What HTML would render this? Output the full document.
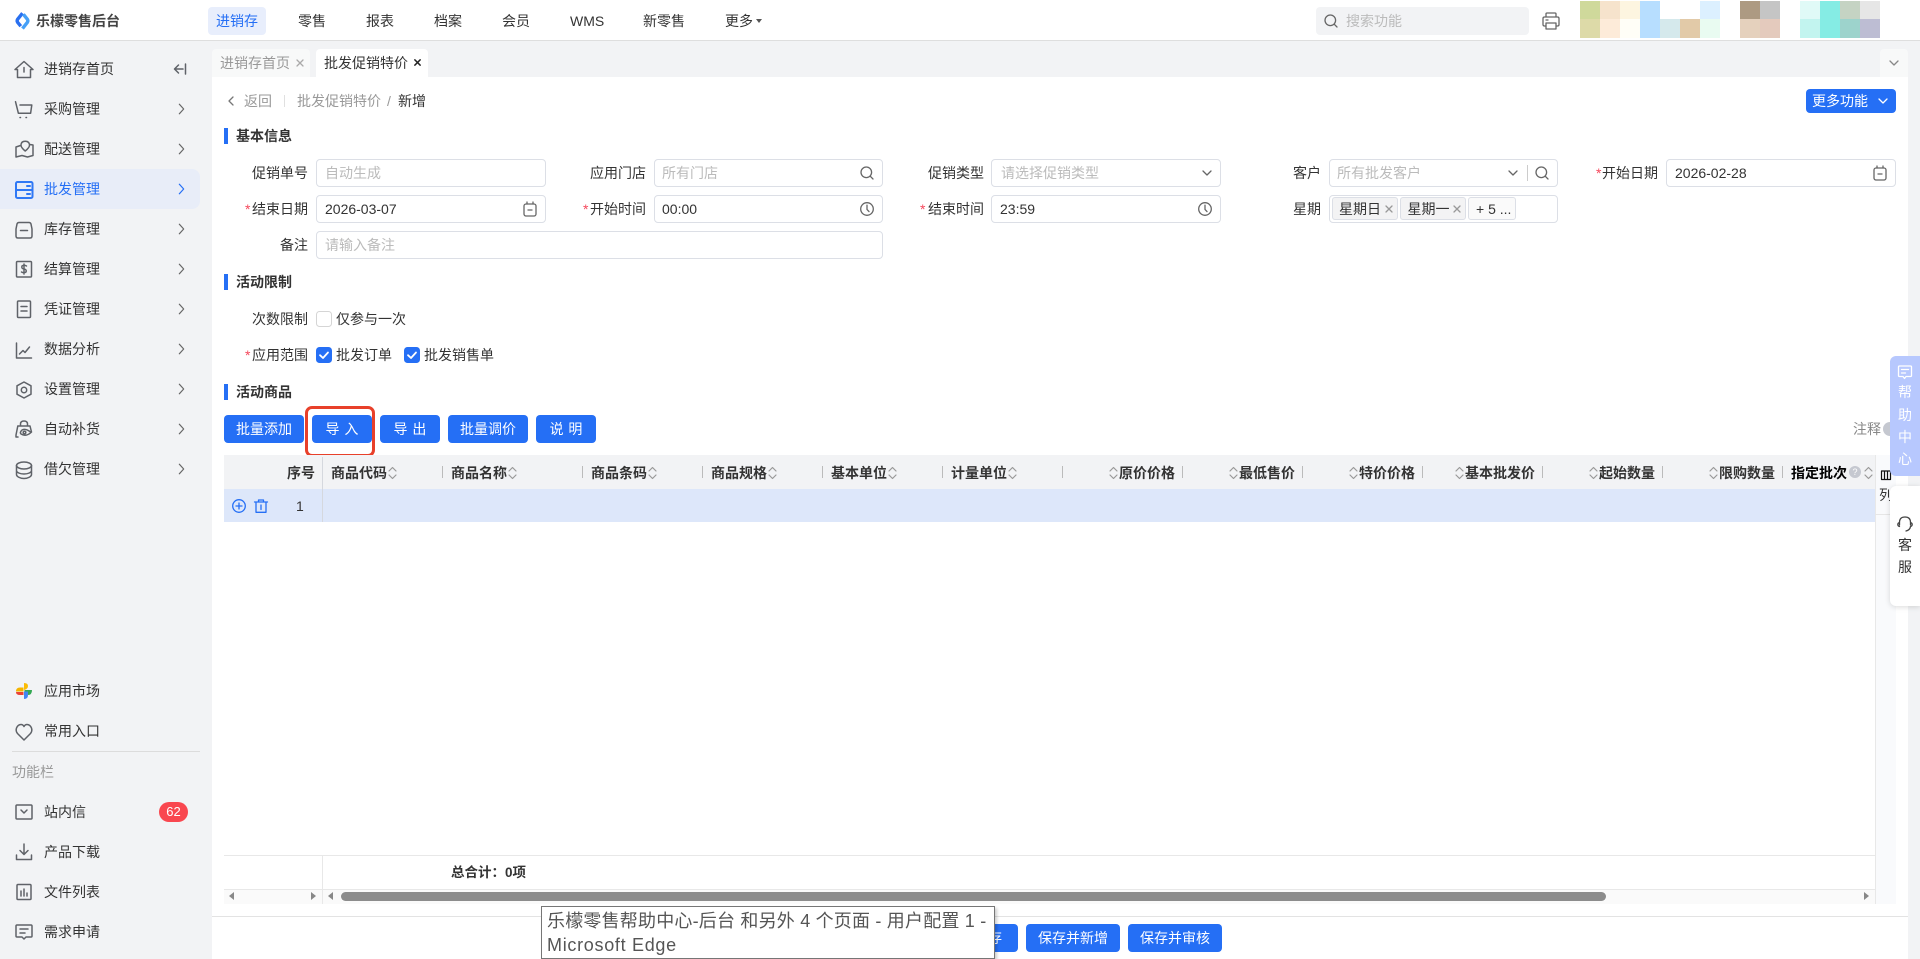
<!DOCTYPE html>
<html lang="zh-CN"><head><meta charset="utf-8"><title>乐檬零售后台</title>
<style>
*{box-sizing:border-box}
html,body{margin:0;padding:0;width:1920px;height:959px;overflow:hidden;background:#fff;color:#333;font:14px/20px "Liberation Sans","Noto Sans CJK SC",sans-serif}
.a,.t,.i,.b,svg{position:absolute}
.t{white-space:nowrap;line-height:20px;height:20px}
.g{color:#999}.p{color:#bbb}.r{color:#f5475b}
.h{font-weight:bold}
.i{height:28px;border:1px solid #dcdfe6;border-radius:4px;background:#fff}
.b{background:#256ff5;color:#fff;border-radius:4px;height:28px;display:flex;align-items:center;justify-content:center;white-space:pre}
.bar{position:absolute;left:224px;width:4px;height:16px;background:#256ff5}
.d{position:absolute;top:466px;width:1px;height:12px;background:#bbb}
svg{overflow:visible;fill:none;stroke:#666;stroke-width:1.3;stroke-linecap:round;stroke-linejoin:round}
.m{stroke:#5f6268;stroke-width:1.5}
.tag{position:absolute;top:197px;height:23px;background:#f3f3f4;border:1px solid #dcdfe6;border-radius:3px}
</style></head><body>
<svg width="0" height="0" style="position:absolute"><defs>
<symbol id="ch" viewBox="0 0 8 14"><path d="M1.5 1.5 L6.5 7 L1.5 12.5"/></symbol>
<symbol id="so" viewBox="0 0 9 14"><path d="M1 5 L4.5 1.5 L8 5 M1 9 L4.5 12.5 L8 9" stroke="#999" stroke-width="1.2"/></symbol>
<symbol id="cal" viewBox="0 0 14 16"><rect x="1" y="3" width="12" height="12" rx="2"/><path d="M4 3V1M10 3V1M5 9H9"/></symbol>
<symbol id="clk" viewBox="0 0 14 14"><circle cx="7" cy="7" r="6.3"/><path d="M7 3.2V7.4L9 9.6"/></symbol>
<symbol id="se" viewBox="0 0 14 14"><circle cx="6.3" cy="6.3" r="5.3"/><path d="M10.2 10.2L13 13"/></symbol>
<symbol id="dn" viewBox="0 0 10 6"><path d="M1 1L5 5L9 1"/></symbol>
<symbol id="x" viewBox="0 0 8 8"><path d="M1 1L7 7M7 1L1 7"/></symbol>
<symbol id="ck" viewBox="0 0 16 16"><rect width="16" height="16" rx="3.5" fill="#256ff5" stroke="none"/><path d="M4 8.2L7 11L12 5.5" stroke="#fff" stroke-width="1.8"/></symbol>
</defs></svg>

<!-- sidebar -->
<div class="a" style="left:0;top:41px;width:212px;height:918px;background:#f2f3f5"></div>
<div class="a" style="left:0;top:169px;width:200px;height:40px;background:#e8edf8;border-radius:0 8px 8px 0"></div>

<!-- top bar -->
<div class="a" style="left:0;top:0;width:1920px;height:41px;background:#fff;border-bottom:1px solid #dedede"></div>
<svg style="left:15px;top:11px;stroke-linecap:butt" width="15" height="20" viewBox="0 0 15 20"><path d="M7.5 2.2L2.600 8.300Q1.700 9.800 2.600 11.300L5.800 15.200" stroke="#2a70f0" stroke-width="3.400"/><path d="M8.400 3.300L12.400 8.300Q13.300 9.800 12.400 11.300L7.500 17.600" stroke="#46a0f7" stroke-width="3.400"/></svg>
<div class="t h" style="left:36px;top:11px;color:#444">乐檬零售后台</div>
<div class="a" style="left:208px;top:7px;width:58px;height:28px;background:#e8eefc;border-radius:4px"></div>
<div class="t" style="left:216px;top:11px;color:#256ff5">进销存</div>
<div class="t" style="left:298px;top:11px">零售</div>
<div class="t" style="left:366px;top:11px">报表</div>
<div class="t" style="left:434px;top:11px">档案</div>
<div class="t" style="left:502px;top:11px">会员</div>
<div class="t" style="left:570px;top:11px">WMS</div>
<div class="t" style="left:643px;top:11px">新零售</div>
<div class="t" style="left:725px;top:11px">更多</div>
<div class="a" style="left:756px;top:19px;border:3.500px solid transparent;border-top:4px solid #555;border-bottom:0"></div>
<div class="a" style="left:1316px;top:7px;width:213px;height:28px;background:#f2f3f5;border-radius:4px"></div>
<svg style="left:1324px;top:14px" width="14" height="14"><use href="#se"/></svg>
<div class="t p" style="left:1346px;top:11px">搜索功能</div>
<svg style="left:1542px;top:12px" width="18" height="18" viewBox="0 0 18 18" stroke-width="1.600"><path d="M4 5V2Q4 1 5 1H13Q14 1 14 2V5M4 14H2.500Q1 14 1 12.500V6.500Q1 5 2.500 5H15.500Q17 5 17 6.500V12.500Q17 14 15.500 14H14M4 11H14V17H4Z M4 8H6"/></svg>
<div class="a" style="left:1580px;top:1px;width:20px;height:18px;background:#cfd99b"></div><div class="a" style="left:1580px;top:19px;width:20px;height:19px;background:#dddaa8"></div>
<div class="a" style="left:1600px;top:1px;width:20px;height:18px;background:#f6e3cc"></div><div class="a" style="left:1600px;top:19px;width:20px;height:19px;background:#fdebd9"></div>
<div class="a" style="left:1620px;top:1px;width:20px;height:18px;background:#fdf5e0"></div><div class="a" style="left:1620px;top:19px;width:20px;height:19px;background:#fffef7"></div>
<div class="a" style="left:1640px;top:1px;width:20px;height:37px;background:#b7deff"></div>
<div class="a" style="left:1660px;top:19px;width:20px;height:19px;background:#d5e9ec"></div>
<div class="a" style="left:1680px;top:19px;width:20px;height:19px;background:#e2caa8"></div>
<div class="a" style="left:1700px;top:1px;width:20px;height:18px;background:#dcf0ff"></div><div class="a" style="left:1700px;top:19px;width:20px;height:19px;background:#e9fbf1"></div>
<div class="a" style="left:1740px;top:1px;width:20px;height:18px;background:#ad9a82"></div><div class="a" style="left:1740px;top:19px;width:20px;height:19px;background:#e5d1bd"></div>
<div class="a" style="left:1760px;top:1px;width:20px;height:18px;background:#c5c5c5"></div><div class="a" style="left:1760px;top:19px;width:20px;height:19px;background:#e4cabd"></div>
<div class="a" style="left:1800px;top:1px;width:20px;height:18px;background:#e0faf7"></div><div class="a" style="left:1800px;top:19px;width:20px;height:19px;background:#c2f4ef"></div>
<div class="a" style="left:1820px;top:1px;width:20px;height:37px;background:#85ece4"></div>
<div class="a" style="left:1840px;top:1px;width:20px;height:18px;background:#c5d3c3"></div><div class="a" style="left:1840px;top:19px;width:20px;height:19px;background:#9dd3cc"></div>
<div class="a" style="left:1860px;top:1px;width:20px;height:18px;background:#e6e6e6"></div><div class="a" style="left:1860px;top:19px;width:20px;height:19px;background:#bdbdd3"></div>

<!-- sidebar items -->
<svg class="m" style="left:14px;top:60px" width="20" height="18" viewBox="0 0 20 18"><path d="M1 9.500L10 1.500L19 9.500H16.500V17.500H3.500V9.500ZM10 7.500V12"/></svg>
<div class="t" style="left:44px;top:59px">进销存首页</div>
<svg class="m" style="left:173px;top:63px" width="14" height="12" viewBox="0 0 14 12"><path d="M12.500 1V11M10 6H1.500M5.500 2L1.500 6L5.500 10"/></svg>
<svg class="m" style="left:15px;top:100px" width="18" height="18" viewBox="0 0 18 18"><path d="M0.500 1.700L3.400 13.300H15.600L16.800 5H5M5 17.500H5.500M11 17.500H11.500"/></svg>
<div class="t" style="left:44px;top:99px">采购管理</div>
<svg class="m" style="left:15px;top:140px" width="19" height="18" viewBox="0 0 19 18"><path d="M5.500 5.500L1 7V17L7 15.500L12.500 17L18 15.500V5L15 4.500M10.200 1.200Q14.500 1.200 14.500 5.200Q14.500 7.500 10.200 11Q6 7.500 6 5.200Q6 1.200 10.200 1.200Z"/></svg>
<div class="t" style="left:44px;top:139px">配送管理</div>
<svg style="left:15px;top:180px;stroke:#2f78f5;stroke-width:2" width="18" height="18" viewBox="0 0 18 18"><rect x="1" y="2" width="16.500" height="16" rx="1.500"/><path d="M1 10H17.500M12 6H15M12 14H15"/></svg>
<div class="t" style="left:44px;top:179px;color:#256ff5">批发管理</div>
<svg class="m" style="left:15px;top:220px" width="18" height="18" viewBox="0 0 18 18"><path d="M4 2.500H14Q15.500 2.500 16 4L17 9V16Q17 18 15 18H3Q1 18 1 16V9L2 4Q2.500 2.500 4 2.500ZM5.500 10.500H12.500"/></svg>
<div class="t" style="left:44px;top:219px">库存管理</div>
<svg class="m" style="left:15px;top:260px" width="18" height="18" viewBox="0 0 18 18"><rect x="1.500" y="1.500" width="15" height="15.500" rx="1"/><path d="M11.500 6Q9 4.500 7 6Q6 8.500 9 9Q12 9.500 11 12Q9 13.500 6.500 12M9 4V14"/></svg>
<div class="t" style="left:44px;top:259px">结算管理</div>
<svg class="m" style="left:15px;top:300px" width="18" height="18" viewBox="0 0 18 18"><rect x="2.500" y="1" width="13" height="16.500" rx="1"/><path d="M6 6.500H12M6 11H12"/></svg>
<div class="t" style="left:44px;top:299px">凭证管理</div>
<svg class="m" style="left:15px;top:340px" width="18" height="18" viewBox="0 0 18 18"><path d="M1.500 3V18H16.500M4.500 14L8 10.500L10 12.500L14.500 7"/></svg>
<div class="t" style="left:44px;top:339px">数据分析</div>
<svg class="m" style="left:15px;top:381px" width="18" height="18" viewBox="0 0 18 18"><path d="M9 1L16 4.800V13.200L9 17L2 13.200V4.800Z"/><circle cx="9" cy="9" r="2.700"/></svg>
<div class="t" style="left:44px;top:379px">设置管理</div>
<svg class="m" style="left:15px;top:420px" width="18" height="18" viewBox="0 0 18 18"><path d="M5.500 6V4Q5.500 1 9 1Q12.500 1 12.500 4V6M3 6H15L16.500 12M2.800 6L1 15V17H3M7 10Q11 8 16 12.500Q11 17 6 14Q4.500 12.500 7 10Z"/><circle cx="9.500" cy="12.500" r="1.300"/></svg>
<div class="t" style="left:44px;top:419px">自动补货</div>
<svg class="m" style="left:15px;top:461px" width="18" height="18" viewBox="0 0 18 18"><ellipse cx="9" cy="4.500" rx="7.500" ry="3.500"/><path d="M1.500 4.500V13.500C1.500 15.500 5 17.500 9 17.500C13 17.500 16.500 15.500 16.500 13.500V4.500M1.500 9.500C1.500 11.500 5 13 9 13C13 13 16.500 11.500 16.500 9.500"/></svg>
<div class="t" style="left:44px;top:459px">借欠管理</div>
<svg style="left:177.500px;top:102px" width="7" height="14"><use href="#ch"/></svg>
<svg style="left:177.500px;top:142px" width="7" height="14"><use href="#ch"/></svg>
<svg style="left:177.500px;top:182px;stroke:#256ff5" width="7" height="14"><use href="#ch"/></svg>
<svg style="left:177.500px;top:222px" width="7" height="14"><use href="#ch"/></svg>
<svg style="left:177.500px;top:262px" width="7" height="14"><use href="#ch"/></svg>
<svg style="left:177.500px;top:302px" width="7" height="14"><use href="#ch"/></svg>
<svg style="left:177.500px;top:342px" width="7" height="14"><use href="#ch"/></svg>
<svg style="left:177.500px;top:382px" width="7" height="14"><use href="#ch"/></svg>
<svg style="left:177.500px;top:422px" width="7" height="14"><use href="#ch"/></svg>
<svg style="left:177.500px;top:462px" width="7" height="14"><use href="#ch"/></svg>

<svg style="left:15px;top:682px;stroke:none" width="18" height="18" viewBox="0 0 18 18"><path d="M9 1Q13 1 13 4Q13 7 9 8Z" fill="#fbbc05"/><path d="M9.500 8H17Q17 13 13 13H9.500Z" fill="#34a853"/><path d="M9 9.500H13V13Q13 17 9 17Z" fill="#4285f4"/><path d="M8.500 9.500H1Q1 5.500 5 5.500H8.500Z" fill="#f4b400"/><path d="M8.500 10H1Q1 13 5 13H8.500Z" fill="#ea4335"/></svg>
<div class="t" style="left:44px;top:681px">应用市场</div>
<svg class="m" style="left:15px;top:723px" width="18" height="18" viewBox="0 0 18 18"><path d="M9 17L2.500 10.500Q0.500 8 1.500 5Q3 1.500 6 1.500Q8 1.500 9 3.500Q10 1.500 12 1.500Q15 1.500 16.500 5Q17.500 8 15.500 10.500Z"/></svg>
<div class="t" style="left:44px;top:721px">常用入口</div>
<div class="a" style="left:12px;top:751px;width:188px;height:1px;background:#dcdcdc"></div>
<div class="t g" style="left:12px;top:762px">功能栏</div>
<svg class="m" style="left:15px;top:803px" width="18" height="18" viewBox="0 0 18 18"><rect x="1" y="2" width="16" height="14" rx="1"/><path d="M6 7L9 10L12 7"/></svg>
<div class="t" style="left:44px;top:802px">站内信</div>
<div class="a" style="left:159px;top:802px;width:29px;height:20px;background:#f9474f;border-radius:10px;color:#fff;font-size:13px;line-height:20px;text-align:center">62</div>
<svg class="m" style="left:15px;top:843px" width="18" height="18" viewBox="0 0 18 18"><path d="M9 1V11M5 7.500L9 11.500L13 7.500M1.500 12V16.500H16.500V12"/></svg>
<div class="t" style="left:44px;top:842px">产品下载</div>
<svg class="m" style="left:15px;top:883px" width="18" height="18" viewBox="0 0 18 18"><rect x="2" y="1.500" width="14" height="15" rx="1"/><path d="M6 8V13M9 6V13M12 10V13"/></svg>
<div class="t" style="left:44px;top:882px">文件列表</div>
<svg class="m" style="left:15px;top:923px" width="18" height="18" viewBox="0 0 18 18"><path d="M2 2H16Q17 2 17 3V13Q17 14 16 14H11L9 16L7 14H2Q1 14 1 13V3Q1 2 2 2ZM5 6H13M5 10H10"/></svg>
<div class="t" style="left:44px;top:922px">需求申请</div>

<!-- tabs -->
<div class="a" style="left:212px;top:41px;width:1708px;height:36px;background:#f2f3f5"></div>
<div class="a" style="left:212px;top:49px;width:98px;height:28px;background:#f8f9f9;border-radius:4px 4px 0 0"></div>
<div class="t g" style="left:220px;top:53px">进销存首页</div>
<svg style="left:295.500px;top:59px;stroke:#aaa" width="8" height="8"><use href="#x"/></svg>
<div class="a" style="left:316px;top:49px;width:112px;height:28px;background:#fff;border-radius:4px 4px 0 0"></div>
<div class="t" style="left:324px;top:53px">批发促销特价</div>
<svg style="left:413.500px;top:59px;stroke:#222;stroke-width:1.800" width="7" height="7"><use href="#x"/></svg>
<div class="a" style="left:1880px;top:49px;width:28px;height:28px;background:#f8f9f9;border-radius:4px 4px 0 0"></div>
<svg style="left:1889px;top:60px;stroke:#888" width="10" height="6"><use href="#dn"/></svg>

<!-- main -->
<div class="a" style="left:212px;top:77px;width:1696px;height:882px;background:#fff"></div>
<div class="a" style="left:1908px;top:77px;width:12px;height:882px;background:#f2f3f5"></div>

<svg style="left:228px;top:96px;stroke:#777" width="6" height="10" viewBox="0 0 6 10"><path d="M5 1L1 5L5 9"/></svg>
<div class="t g" style="left:244px;top:91px">返回</div>
<div class="a" style="left:284px;top:95px;width:1px;height:12px;background:#e0e0e0"></div>
<div class="t g" style="left:297px;top:91px">批发促销特价</div>
<div class="t g" style="left:387px;top:91px">/</div>
<div class="t" style="left:398px;top:91px">新增</div>
<div class="b" style="left:1806px;top:89px;width:90px;height:24px;justify-content:flex-start;padding-left:6px">更多功能</div>
<svg style="left:1878px;top:98px;stroke:#fff" width="10" height="6"><use href="#dn"/></svg>

<div class="bar" style="top:128px"></div><div class="t h" style="left:236px;top:126px">基本信息</div>

<!-- row 1 -->
<div class="t" style="left:252px;top:163px">促销单号</div>
<div class="i" style="left:316px;top:159px;width:230px"></div><div class="t p" style="left:325px;top:163px">自动生成</div>
<div class="t" style="left:590px;top:163px">应用门店</div>
<div class="i" style="left:654px;top:159px;width:229px"></div><div class="t p" style="left:662px;top:163px">所有门店</div>
<svg style="left:860px;top:166px" width="14" height="14"><use href="#se"/></svg>
<div class="t" style="left:928px;top:163px">促销类型</div>
<div class="i" style="left:991px;top:159px;width:230px"></div><div class="t p" style="left:1001px;top:163px">请选择促销类型</div>
<svg style="left:1201.500px;top:170px" width="10" height="6"><use href="#dn"/></svg>
<div class="t" style="left:1293px;top:163px">客户</div>
<div class="i" style="left:1329px;top:159px;width:229px"></div><div class="t p" style="left:1337px;top:163px">所有批发客户</div>
<svg style="left:1508px;top:170px" width="10" height="6"><use href="#dn"/></svg>
<div class="a" style="left:1527px;top:165px;width:1px;height:16px;background:#ccc"></div>
<svg style="left:1535px;top:166px" width="14" height="14"><use href="#se"/></svg>
<div class="t r" style="left:1596px;top:163px">*</div><div class="t" style="left:1602px;top:163px">开始日期</div>
<div class="i" style="left:1666px;top:159px;width:230px"></div><div class="t" style="left:1675px;top:163px">2026-02-28</div>
<svg style="left:1873px;top:165px" width="14" height="16"><use href="#cal"/></svg>

<!-- row 2 -->
<div class="t r" style="left:245px;top:199px">*</div><div class="t" style="left:252px;top:199px">结束日期</div>
<div class="i" style="left:316px;top:195px;width:230px"></div><div class="t" style="left:325px;top:199px">2026-03-07</div>
<svg style="left:523px;top:201px" width="14" height="16"><use href="#cal"/></svg>
<div class="t r" style="left:583px;top:199px">*</div><div class="t" style="left:590px;top:199px">开始时间</div>
<div class="i" style="left:654px;top:195px;width:229px"></div><div class="t" style="left:662px;top:199px">00:00</div>
<svg style="left:860px;top:202px" width="14" height="14"><use href="#clk"/></svg>
<div class="t r" style="left:920px;top:199px">*</div><div class="t" style="left:928px;top:199px">结束时间</div>
<div class="i" style="left:991px;top:195px;width:230px"></div><div class="t" style="left:1000px;top:199px">23:59</div>
<svg style="left:1198px;top:202px" width="14" height="14"><use href="#clk"/></svg>
<div class="t" style="left:1293px;top:199px">星期</div>
<div class="i" style="left:1329px;top:195px;width:229px"></div>
<div class="tag" style="left:1332px;width:66px"></div><div class="t" style="left:1339px;top:199px">星期日</div>
<svg style="left:1385px;top:205px;stroke:#999" width="8" height="8"><use href="#x"/></svg>
<div class="tag" style="left:1400px;width:66px"></div><div class="t" style="left:1407.500px;top:199px">星期一</div>
<svg style="left:1453px;top:205px;stroke:#999" width="8" height="8"><use href="#x"/></svg>
<div class="tag" style="left:1468px;width:48px;background:#fafafa"></div><div class="t" style="left:1476px;top:199px">+ 5 ...</div>

<!-- row 3 -->
<div class="t" style="left:280px;top:235px">备注</div>
<div class="i" style="left:316px;top:231px;width:567px"></div><div class="t p" style="left:325px;top:235px">请输入备注</div>

<div class="bar" style="top:274px"></div><div class="t h" style="left:236px;top:272px">活动限制</div>
<div class="t" style="left:252px;top:309px">次数限制</div>
<div class="a" style="left:316px;top:311px;width:16px;height:16px;border:1px solid #d5d5d5;border-radius:3.500px;background:#fff"></div>
<div class="t" style="left:336px;top:309px">仅参与一次</div>
<div class="t r" style="left:245px;top:345px">*</div><div class="t" style="left:252px;top:345px">应用范围</div>
<svg style="left:316px;top:347px" width="16" height="16"><use href="#ck"/></svg>
<div class="t" style="left:336px;top:345px">批发订单</div>
<svg style="left:404px;top:347px" width="16" height="16"><use href="#ck"/></svg>
<div class="t" style="left:424px;top:345px">批发销售单</div>

<div class="bar" style="top:384px"></div><div class="t h" style="left:236px;top:382px">活动商品</div>
<div class="b" style="left:224px;top:415px;width:80px">批量添加</div>
<div class="b" style="left:312px;top:415px;width:60px;word-spacing:1px">导 入</div>
<div class="b" style="left:380px;top:415px;width:60px;word-spacing:1px">导 出</div>
<div class="b" style="left:448px;top:415px;width:80px">批量调价</div>
<div class="b" style="left:536px;top:415px;width:60px;word-spacing:1px">说 明</div>
<div class="a" style="left:304.500px;top:406px;width:70.500px;height:51px;border:3px solid #e8402a;border-radius:7px"></div>
<div class="t" style="left:1853px;top:419px;color:#888">注释</div>
<div class="a" style="left:1883px;top:422px;width:14px;height:14px;border-radius:50%;background:#c5c8d0"></div>

<!-- table -->
<div class="a" style="left:224px;top:455px;width:1651px;height:34px;background:#f2f3f5"></div>
<div class="a" style="left:224px;top:489px;width:1651px;height:33px;background:#dde7fa"></div>
<div class="a" style="left:322px;top:457px;width:1px;height:65px;background:#d5d8de"></div>
<div class="a" style="left:1875px;top:455px;width:21px;height:449px;background:#f9fafc;border-left:1px solid #e8e8e8"></div>
<div class="a" style="left:1875px;top:514px;width:21px;height:1px;background:#e6e6e6"></div>
<div class="t h" style="left:287px;top:463px">序号</div>
<svg style="left:232px;top:499px;stroke:#256ff5" width="14" height="14" viewBox="0 0 14 14"><circle cx="7" cy="7" r="6.300"/><path d="M7 4V10M4 7H10"/></svg>
<svg style="left:254px;top:499px;stroke:#256ff5" width="14" height="14" viewBox="0 0 14 14"><path d="M0.500 3H13.500M4.500 3V1H9.500V3M2 3V13.300H12V3M7 6V10.500"/></svg>
<div class="t" style="left:296px;top:496px">1</div>

<div class="t h" style="left:331px;top:463px">商品代码</div><svg style="left:388px;top:466px" width="9" height="14"><use href="#so"/></svg><div class="d" style="left:442px"></div>
<div class="t h" style="left:451px;top:463px">商品名称</div><svg style="left:508px;top:466px" width="9" height="14"><use href="#so"/></svg><div class="d" style="left:582px"></div>
<div class="t h" style="left:591px;top:463px">商品条码</div><svg style="left:648px;top:466px" width="9" height="14"><use href="#so"/></svg><div class="d" style="left:702px"></div>
<div class="t h" style="left:711px;top:463px">商品规格</div><svg style="left:768px;top:466px" width="9" height="14"><use href="#so"/></svg><div class="d" style="left:822px"></div>
<div class="t h" style="left:831px;top:463px">基本单位</div><svg style="left:888px;top:466px" width="9" height="14"><use href="#so"/></svg><div class="d" style="left:942px"></div>
<div class="t h" style="left:951px;top:463px">计量单位</div><svg style="left:1008px;top:466px" width="9" height="14"><use href="#so"/></svg><div class="d" style="left:1062px"></div>
<svg style="left:1109px;top:466px" width="9" height="14"><use href="#so"/></svg><div class="t h" style="left:1119px;top:463px">原价价格</div><div class="d" style="left:1182px"></div>
<svg style="left:1229px;top:466px" width="9" height="14"><use href="#so"/></svg><div class="t h" style="left:1239px;top:463px">最低售价</div><div class="d" style="left:1302px"></div>
<svg style="left:1349px;top:466px" width="9" height="14"><use href="#so"/></svg><div class="t h" style="left:1359px;top:463px">特价价格</div><div class="d" style="left:1422px"></div>
<svg style="left:1455px;top:466px" width="9" height="14"><use href="#so"/></svg><div class="t h" style="left:1465px;top:463px">基本批发价</div><div class="d" style="left:1542px"></div>
<svg style="left:1589px;top:466px" width="9" height="14"><use href="#so"/></svg><div class="t h" style="left:1599px;top:463px">起始数量</div><div class="d" style="left:1662px"></div>
<svg style="left:1709px;top:466px" width="9" height="14"><use href="#so"/></svg><div class="t h" style="left:1719px;top:463px">限购数量</div><div class="d" style="left:1782px"></div>
<div class="t h" style="left:1791px;top:463px;color:#000">指定批次</div>
<div class="a" style="left:1849px;top:466px;width:12px;height:12px;border-radius:50%;background:#c5c8d0;color:#fff;font-size:9px;line-height:12px;text-align:center">?</div>
<svg style="left:1864px;top:466px" width="9" height="14"><use href="#so"/></svg>
<svg style="left:1881px;top:470px;stroke:#111;stroke-width:1.200" width="10" height="10" viewBox="0 0 10 10"><path d="M0.500 1H9.500V9.500H0.500ZM3.500 1V9.500M6.500 1V9.500" /></svg>
<div class="t" style="left:1879px;top:485px;width:11px;overflow:hidden">列</div>

<!-- table foot -->
<div class="a" style="left:224px;top:855px;width:1651px;height:1px;background:#e8e8e8"></div>
<div class="a" style="left:224px;top:889px;width:1651px;height:1px;background:#e8e8e8"></div>
<div class="a" style="left:224px;top:890px;width:1651px;height:14px;background:#fafafa"></div>
<div class="a" style="left:322px;top:856px;width:1px;height:48px;background:#e8e8e8"></div>
<div class="t h" style="left:451px;top:863px;font-size:13.500px">总合计：0项</div>
<div class="a" style="left:229px;top:892px;border:4.500px solid transparent;border-right:5px solid #888;border-left:0"></div>
<div class="a" style="left:311px;top:892px;border:4.500px solid transparent;border-left:5px solid #888;border-right:0"></div>
<div class="a" style="left:328px;top:892px;border:4.500px solid transparent;border-right:5px solid #888;border-left:0"></div>
<div class="a" style="left:341px;top:892px;width:1265px;height:9px;background:#8c8c8c;border-radius:4.500px"></div>
<div class="a" style="left:1864px;top:892px;border:4.500px solid transparent;border-left:5px solid #888;border-right:0"></div>

<!-- footer -->
<div class="a" style="left:212px;top:916px;width:1696px;height:1px;background:#e3e3e3"></div>
<div class="b" style="left:958px;top:924px;width:60px">保存</div>
<div class="b" style="left:1026px;top:924px;width:94px">保存并新增</div>
<div class="b" style="left:1128px;top:924px;width:94px">保存并审核</div>

<!-- tooltip -->
<div class="a" style="left:541px;top:906px;width:454px;height:53px;background:#fff;border:1px solid #767676;box-shadow:2px 2px 3px rgba(0,0,0,.2)"></div>
<div class="t" style="left:547px;top:908px;font-size:18px;line-height:26px;height:26px;color:#555;letter-spacing:.2px">乐檬零售帮助中心-后台 和另外 4 个页面 - 用户配置 1 -</div>
<div class="t" style="left:547px;top:932px;font-size:18px;line-height:26px;height:26px;color:#555;letter-spacing:.7px">Microsoft Edge</div>

<!-- floating panels -->
<div class="a" style="left:1890px;top:356px;width:30px;height:120px;background:#b7c8fe;border-radius:6px 0 0 6px"></div>
<svg style="left:1898px;top:365px;stroke:#fff" width="14" height="14" viewBox="0 0 14 14"><path d="M1.500 1H12.500Q13.500 1 13.500 2V10.500Q13.500 11.500 12.500 11.500H8L6.500 13.500L5 11.500H1.500Q0.500 11.500 0.500 10.500V2Q0.500 1 1.500 1ZM3.500 4.500H10.500M3.500 8H7.500"/></svg>
<div class="t" style="left:1898px;top:382px;color:#fff">帮</div>
<div class="t" style="left:1898px;top:405px;color:#fff">助</div>
<div class="t" style="left:1898px;top:427px;color:#fff">中</div>
<div class="t" style="left:1898px;top:449px;color:#fff">心</div>
<div class="a" style="left:1890px;top:486px;width:30px;height:120px;background:#fff;border-radius:6px 0 0 6px;box-shadow:0 1px 6px rgba(0,0,0,.15)"></div>
<svg style="left:1897px;top:516px;stroke:#444" width="16" height="17" viewBox="0 0 16 17"><path d="M2.500 9V6.500Q2.500 1 8 1Q13.500 1 13.500 6.500V9M2.500 6.500Q0.800 7 0.800 8.500Q0.800 10 2.500 10.500M13.500 6.500Q15.200 7 15.200 8.500Q15.200 10 13.500 10.500M13.500 10.500Q13 14 9 15"/></svg>
<div class="t" style="left:1898px;top:535px">客</div>
<div class="t" style="left:1898px;top:557px">服</div>
</body></html>
